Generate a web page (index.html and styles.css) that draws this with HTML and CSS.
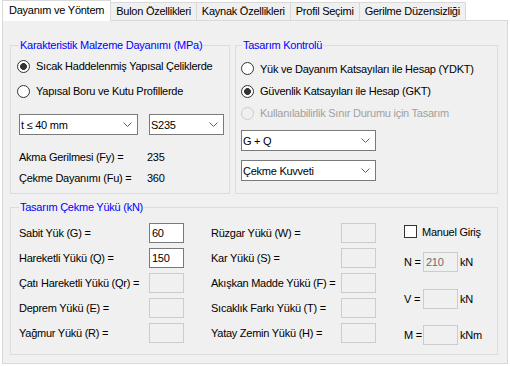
FILE: index.html
```html
<!DOCTYPE html>
<html lang="tr">
<head>
<meta charset="utf-8">
<title>Dayanım ve Yöntem</title>
<link rel="stylesheet" href="styles.css">
</head>
<body>
<div class="tabs">
  <div class="tab tab-active">Dayanım ve Yöntem</div>
  <div class="tab">Bulon Özellikleri</div>
  <div class="tab">Kaynak Özellikleri</div>
  <div class="tab">Profil Seçimi</div>
  <div class="tab">Gerilme Düzensizliği</div>
</div>
<div class="page">
  <div class="top-row">
    <fieldset class="group g1">
      <legend>Karakteristik Malzeme Dayanımı (MPa)</legend>
      <div class="radio-row g1-r1"><span class="radio checked"></span>Sıcak Haddelenmiş Yapısal Çeliklerde</div>
      <div class="radio-row g1-r2"><span class="radio"></span>Yapısal Boru ve Kutu Profillerde</div>
      <div class="combo-row">
        <div class="combo combo-t"><span>t ≤ 40 mm</span><svg class="chev" width="9" height="5" viewBox="0 0 9 5"><path d="M0.5 0.5 L4.5 4.5 L8.5 0.5" fill="none" stroke="#606060" stroke-width="1"/></svg></div>
        <div class="combo combo-s"><span>S235</span><svg class="chev" width="9" height="5" viewBox="0 0 9 5"><path d="M0.5 0.5 L4.5 4.5 L8.5 0.5" fill="none" stroke="#606060" stroke-width="1"/></svg></div>
      </div>
      <div class="value-row v1"><span class="vlabel">Akma Gerilmesi (Fy) =</span><span>235</span></div>
      <div class="value-row v2"><span class="vlabel">Çekme Dayanımı (Fu) =</span><span>360</span></div>
    </fieldset>
    <fieldset class="group g2">
      <legend>Tasarım Kontrolü</legend>
      <div class="radio-row g2-r1"><span class="radio"></span>Yük ve Dayanım Katsayıları ile Hesap (YDKT)</div>
      <div class="radio-row g2-r2"><span class="radio checked"></span>Güvenlik Katsayıları ile Hesap (GKT)</div>
      <div class="radio-row g2-r3 disabled"><span class="radio"></span>Kullanılabilirlik Sınır Durumu için Tasarım</div>
      <div class="combo combo-w combo-first"><span>G + Q</span><svg class="chev" width="9" height="5" viewBox="0 0 9 5"><path d="M0.5 0.5 L4.5 4.5 L8.5 0.5" fill="none" stroke="#606060" stroke-width="1"/></svg></div>
      <div class="combo combo-w combo-second"><span>Çekme Kuvveti</span><svg class="chev" width="9" height="5" viewBox="0 0 9 5"><path d="M0.5 0.5 L4.5 4.5 L8.5 0.5" fill="none" stroke="#606060" stroke-width="1"/></svg></div>
    </fieldset>
  </div>
  <fieldset class="group g3">
    <legend>Tasarım Çekme Yükü (kN)</legend>
    <div class="loads">
      <div class="load-grid">
        <div class="lbl">Sabit Yük (G) =</div><div class="box">60</div>
        <div class="lbl lbl-right">Rüzgar Yükü (W) =</div><div class="box off"></div>
        <div class="lbl">Hareketli Yükü (Q) =</div><div class="box">150</div>
        <div class="lbl lbl-right">Kar Yükü (S) =</div><div class="box off"></div>
        <div class="lbl">Çatı Hareketli Yükü (Qr) =</div><div class="box off"></div>
        <div class="lbl lbl-right">Akışkan Madde Yükü (F) =</div><div class="box off"></div>
        <div class="lbl">Deprem Yükü (E) =</div><div class="box off"></div>
        <div class="lbl lbl-right">Sıcaklık Farkı Yükü (T) =</div><div class="box off"></div>
        <div class="lbl">Yağmur Yükü (R) =</div><div class="box off"></div>
        <div class="lbl lbl-right">Yatay Zemin Yükü (H) =</div><div class="box off"></div>
      </div>
      <div class="manual">
        <div class="check-row"><span class="check"></span>Manuel Giriş</div>
        <div class="force-row fr-n"><span class="flabel">N =</span><div class="box off fbox">210</div><span class="unit">kN</span></div>
        <div class="force-row fr-v"><span class="flabel">V =</span><div class="box off fbox"></div><span class="unit">kN</span></div>
        <div class="force-row fr-m"><span class="flabel">M =</span><div class="box off fbox"></div><span class="unit">kNm</span></div>
      </div>
    </div>
  </fieldset>
</div>
</body>
</html>
```

FILE: styles.css
```css
* {
  box-sizing: border-box;
}

body {
  margin: 0;
  width: 510px;
  height: 366px;
  overflow: hidden;
  background: #ffffff;
  color: #000000;
  font-family: "Liberation Sans", Arial, sans-serif;
  font-size: 11px;
  letter-spacing: -0.25px;
}

/* Tabs */
.tabs {
  display: flex;
  height: 20px;
  padding-left: 2px;
}

.tab {
  margin-left: -1px;
  margin-top: 2px;
  height: 18px;
  padding: 0 5px;
  border: 1px solid #d9d9d9;
  border-bottom: none;
  background: #f0f0f0;
  line-height: 16px;
  white-space: nowrap;
}

.tab-active {
  position: relative;
  z-index: 1;
  margin-left: 0;
  margin-top: 0;
  height: 21px;
  padding: 0 6px 0 6px;
  background: #ffffff;
  line-height: 19px;
}

/* Page */
.page {
  margin-left: 2px;
  width: 506px;
  height: 344px;
  border: 1px solid #d9d9d9;
  background: #f0f0f0;
  padding: 18px 0 0 7px;
}

.top-row {
  display: flex;
  gap: 5px;
}

.group {
  margin: 0;
  min-inline-size: 0;
  border: 1px solid #dcdcdc;
  padding: 0;
}

.group legend {
  padding: 0 1px;
  line-height: 13px;
  color: #0000ff;
  white-space: nowrap;
}

.g1 {
  width: 220px;
  height: 155px;
  padding-left: 8px;
}

.g2 {
  width: 263px;
  height: 155px;
  padding-left: 5px;
}

.g2 legend {
  margin-left: 1px;
}

.g3 {
  width: 488px;
  height: 154px;
  margin-top: 7px;
  padding: 9px 0 0 8px;
}

/* Radios */
.radio-row {
  display: flex;
  align-items: center;
  height: 20px;
  white-space: nowrap;
}

.radio {
  flex: none;
  width: 13px;
  height: 13px;
  margin-right: 6px;
  border: 1px solid #333333;
  border-radius: 50%;
  background: #ffffff;
}

.radio.checked {
  background: radial-gradient(circle, #333333 0, #333333 3.1px, #ffffff 3.7px);
}

.radio-row.disabled {
  color: #a0a0a0;
}

.radio-row.disabled .radio {
  border-color: #cccccc;
  background: #f0f0f0;
}

.g1 .radio-row {
  margin-left: -2px;
}

.g1-r1 {
  margin-top: 4px;
}

.g1-r2 {
  margin-top: 5px;
}

.g2-r1 {
  margin-top: 5px;
  height: 23px;
}

.g2-r2,
.g2-r3 {
  height: 22px;
}

/* Combos */
.combo-row {
  display: flex;
  gap: 11px;
  margin-top: 13px;
}

.combo {
  display: flex;
  align-items: center;
  height: 21px;
  border: 1px solid #7a7a7a;
  background: #ffffff;
  padding-left: 1px;
  white-space: nowrap;
}

.chev {
  flex: none;
  margin-left: auto;
  margin-right: 5px;
}

.combo-t {
  width: 119px;
}

.combo-s {
  width: 75px;
}

.combo-w {
  width: 135px;
}

.combo-first {
  margin-top: 6px;
}

.combo-second {
  margin-top: 9px;
}

/* Values */
.value-row {
  display: flex;
  align-items: center;
  height: 20px;
  white-space: nowrap;
}

.vlabel {
  width: 128px;
}

.v1 {
  margin-top: 12px;
}

.v2 {
  margin-top: 1px;
}

/* Loads */
.loads {
  display: flex;
}

.load-grid {
  display: grid;
  grid-template-columns: 130px 35px 157px 35px;
  grid-auto-rows: 20px;
  row-gap: 5px;
}

.lbl {
  display: flex;
  align-items: center;
  white-space: nowrap;
}

.lbl-right {
  padding-left: 27px;
}

.box {
  display: flex;
  align-items: center;
  height: 20px;
  border: 1px solid #7a7a7a;
  background: #ffffff;
  padding-left: 2px;
}

.box.off {
  border-color: #cccccc;
  background: #f0f0f0;
  color: #6d6d6d;
}

.manual {
  display: flex;
  flex-direction: column;
  margin-left: 28px;
}

.check-row {
  display: flex;
  align-items: center;
  height: 17px;
  white-space: nowrap;
}

.check {
  flex: none;
  width: 13px;
  height: 13px;
  margin-right: 5px;
  border: 1px solid #333333;
  background: #ffffff;
}

.force-row {
  display: flex;
  align-items: center;
  height: 20px;
  white-space: nowrap;
}

.flabel {
  width: 19px;
}

.fbox {
  width: 35px;
}

.unit {
  margin-left: 2px;
}

.fr-n {
  margin-top: 12px;
}

.fr-v {
  margin-top: 17px;
}

.fr-m {
  margin-top: 16px;
}
```
